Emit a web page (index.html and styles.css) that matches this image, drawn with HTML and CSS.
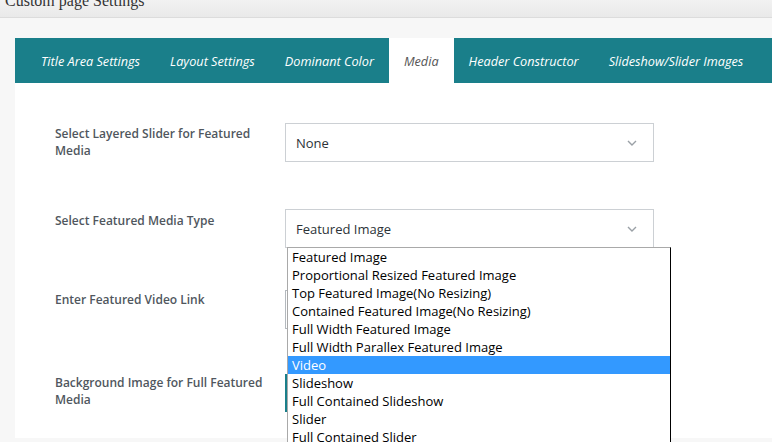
FILE: index.html
```html
<!DOCTYPE html>
<html>
<head>
<meta charset="utf-8">
<link rel="stylesheet" href="styles.css">
</head>
<body>
<div class="topbar"><h2 class="title">Custom page Settings</h2></div>
<div class="page">
  <div class="panel">
    <div class="tabs">
      <span class="tab">Title Area Settings</span>
      <span class="tab">Layout Settings</span>
      <span class="tab">Dominant Color</span>
      <span class="tab active">Media</span>
      <span class="tab">Header Constructor</span>
      <span class="tab">Slideshow/Slider Images</span>
    </div>
    <div class="content">
      <div class="row row-1">
        <div class="label">Select Layered Slider for Featured Media</div>
        <div class="control">
          <div class="select"><span>None</span><svg class="chev" width="10" height="6" viewBox="0 0 10 6"><polyline points="1,1 5,5 9,1" fill="none" stroke="#9aa0a6" stroke-width="1.4"/></svg></div>
        </div>
      </div>
      <div class="row row-2">
        <div class="label">Select Featured Media Type</div>
        <div class="control">
          <div class="select"><span>Featured Image</span><svg class="chev" width="10" height="6" viewBox="0 0 10 6"><polyline points="1,1 5,5 9,1" fill="none" stroke="#9aa0a6" stroke-width="1.4"/></svg></div>
          <ul class="dropdown">
            <li>Featured Image</li>
            <li>Proportional Resized Featured Image</li>
            <li>Top Featured Image(No Resizing)</li>
            <li>Contained Featured Image(No Resizing)</li>
            <li>Full Width Featured Image</li>
            <li>Full Width Parallex Featured Image</li>
            <li class="sel">Video</li>
            <li>Slideshow</li>
            <li>Full Contained Slideshow</li>
            <li>Slider</li>
            <li>Full Contained Slider</li>
          </ul>
        </div>
      </div>
      <div class="row row-3">
        <div class="label">Enter Featured Video Link</div>
        <div class="control"><div class="input"></div></div>
      </div>
      <div class="row row-4">
        <div class="label">Background Image for Full Featured Media</div>
        <div class="control"><div class="upload"></div></div>
      </div>
    </div>
  </div>
</div>
</body>
</html>
```
FILE: styles.css
```css
html, body {
  margin: 0;
  padding: 0;
}
body {
  background: #f7f7f7;
  font-family: "Open Sans", "Noto Sans", sans-serif;
  width: 772px;
  height: 442px;
  overflow: hidden;
}
.topbar {
  height: 17px;
  overflow: hidden;
  background: linear-gradient(#f2f2f2, #e9e9e9);
  border-bottom: 1px solid #dcdcdc;
}
.title {
  margin: -9px 0 0 5px;
  font-family: "Liberation Serif", "Times New Roman", serif;
  font-weight: normal;
  font-size: 16px;
  line-height: 20px;
  color: #333;
}
.page {
  padding: 20px 0 0 15px;
}
.panel {
  background: #fff;
  height: 400px;
}
.tabs {
  display: flex;
  height: 45px;
  background: #1a7f8a;
  padding-left: 11px;
}
.tab {
  display: flex;
  align-items: center;
  padding: 0 15px;
  color: #fff;
  font-style: italic;
  font-size: 12.7px;
  white-space: nowrap;
}
.tab.active {
  background: #fff;
  color: #555;
}
.content {
  padding: 40px 0 0 40px;
}
.row {
  display: grid;
  grid-template-columns: 230px 369px;
}
.row-1 { margin-bottom: 47px; }
.row-2 { margin-bottom: 42px; }
.row-3 { margin-bottom: 45px; }
.label {
  font-size: 12px;
  font-weight: 600;
  line-height: 17px;
  color: #50575e;
  padding-top: 2px;
  padding-right: 8px;
}
.row-2 .label { padding-top: 3px; }
.row-3 .label { padding-top: 1px; }
.row-4 .label { padding-top: 0; }
.control {
  position: relative;
}
.select {
  height: 37px;
  border: 1px solid #ccd0d4;
  display: flex;
  align-items: center;
  justify-content: space-between;
  padding: 0 16px 0 10px;
  font-size: 13px;
  color: #2c3338;
}
.chev {
  display: block;
}
.input {
  height: 37px;
  border: 1px solid #b4b9be;
}
.upload {
  height: 38px;
  border-left: 2px solid #1a7f8a;
}
.dropdown {
  position: absolute;
  left: 2px;
  top: 38px;
  width: 382px;
  margin: 0;
  padding: 0;
  list-style: none;
  background: #fff;
  border-top: 1px solid #a9a9a9;
  border-left: 1px solid #a9a9a9;
  border-right: 1px solid #000;
  font-size: 13px;
  line-height: 18px;
  color: #000;
  z-index: 2;
}
.dropdown li {
  padding-left: 4px;
  height: 18px;
}
.dropdown li.sel {
  background: #3399ff;
  color: #fff;
}
```
